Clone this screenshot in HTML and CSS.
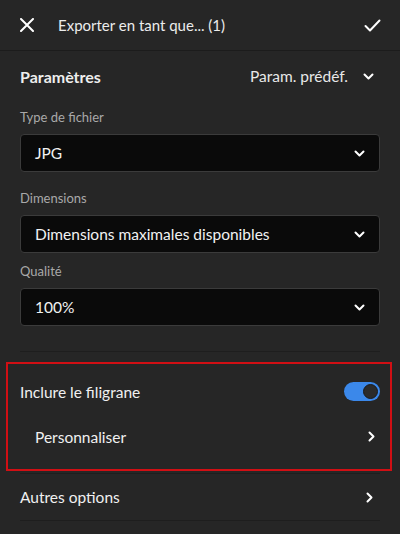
FILE: index.html
```html
<!DOCTYPE html>
<html lang="fr">
<head>
  <meta charset="UTF-8">
  <meta name="viewport" content="width=device-width, initial-scale=1.0">
  <title>Exporter en tant que</title>
  <link rel="stylesheet" href="styles.css">
</head>
<body>
  <div class="header">
    <svg class="icon-close" width="14" height="14" viewBox="0 0 14 14"><path d="M1 1L13 13M13 1L1 13" stroke="#fff" stroke-width="2" stroke-linecap="round"/></svg>
    <span class="title">Exporter en tant que... (1)</span>
    <svg class="icon-check" width="17" height="13" viewBox="0 0 17 13"><path d="M1.5 7L6 11.5L15.5 1.5" stroke="#fff" stroke-width="2" fill="none" stroke-linecap="round" stroke-linejoin="round"/></svg>
  </div>

  <div class="content">
    <div class="section-head">
      <span class="section-title">Paramètres</span>
      <span class="preset">Param. prédéf.
        <svg class="chev" width="11" height="7" viewBox="0 0 11 7"><path d="M1.5 1.5L5.5 5.5L9.5 1.5" stroke="#fff" stroke-width="2" fill="none" stroke-linecap="round" stroke-linejoin="round"/></svg>
      </span>
    </div>

    <label class="field-label first">Type de fichier</label>
    <div class="select">
      <span>JPG</span>
      <svg class="chev" width="11" height="7" viewBox="0 0 11 7"><path d="M1.5 1.5L5.5 5.5L9.5 1.5" stroke="#fff" stroke-width="2" fill="none" stroke-linecap="round" stroke-linejoin="round"/></svg>
    </div>

    <label class="field-label second">Dimensions</label>
    <div class="select">
      <span>Dimensions maximales disponibles</span>
      <svg class="chev" width="11" height="7" viewBox="0 0 11 7"><path d="M1.5 1.5L5.5 5.5L9.5 1.5" stroke="#fff" stroke-width="2" fill="none" stroke-linecap="round" stroke-linejoin="round"/></svg>
    </div>

    <label class="field-label third">Qualité</label>
    <div class="select">
      <span>100%</span>
      <svg class="chev" width="11" height="7" viewBox="0 0 11 7"><path d="M1.5 1.5L5.5 5.5L9.5 1.5" stroke="#fff" stroke-width="2" fill="none" stroke-linecap="round" stroke-linejoin="round"/></svg>
    </div>

    <div class="divider top-divider"></div>
  </div>

  <div class="watermark">
    <div class="row">
      <span>Inclure le filigrane</span>
      <div class="toggle"><div class="knob"></div></div>
    </div>
    <div class="row sub">
      <span>Personnaliser</span>
      <svg class="chev-right" width="7" height="11" viewBox="0 0 7 11"><path d="M1.5 1.5L5.5 5.5L1.5 9.5" stroke="#fff" stroke-width="2" fill="none" stroke-linecap="round" stroke-linejoin="round"/></svg>
    </div>
  </div>

  <div class="content">
    <div class="divider"></div>
    <div class="row options">
      <span>Autres options</span>
      <svg class="chev-right" width="7" height="11" viewBox="0 0 7 11"><path d="M1.5 1.5L5.5 5.5L1.5 9.5" stroke="#fff" stroke-width="2" fill="none" stroke-linecap="round" stroke-linejoin="round"/></svg>
    </div>
    <div class="divider"></div>
  </div>
</body>
</html>
```

FILE: styles.css
```css
body {
  font-family: 'Lato', 'Noto Sans', sans-serif;
  background-color: #262626;
  color: #f0f0f0;
  margin: 0;
  padding: 0;
  width: 400px;
  height: 534px;
  overflow: hidden;
}

.header {
  display: flex;
  align-items: center;
  height: 51px;
  padding: 0 19px 0 20px;
  border-bottom: 1px solid #1c1c1c;
  box-sizing: border-box;
}

.icon-close {
  margin-right: 24px;
}

.title {
  flex: 1;
  font-size: 15px;
  color: #ececec;
  padding-bottom: 1px;
}

.content {
  padding: 0 20px;
}

.section-head {
  display: flex;
  justify-content: space-between;
  align-items: center;
  height: 50px;
}

.section-title {
  font-weight: bold;
  font-size: 16px;
  color: #eee;
}

.preset {
  font-size: 15.5px;
  color: #e8e8e8;
  display: flex;
  align-items: center;
  gap: 15px;
  margin-right: 6px;
}

.field-label {
  display: block;
  font-size: 13px;
  color: #a9a9a9;
  height: 22px;
  line-height: 22px;
  margin-bottom: 6px;
}

.field-label.first {
  margin-top: 5px;
}

.field-label.second {
  margin-top: 15px;
}

.field-label.third {
  margin-top: 7px;
}

.select {
  display: flex;
  justify-content: space-between;
  align-items: center;
  height: 38px;
  background-color: #0a0a0a;
  border: 1px solid #3b3b3b;
  border-radius: 4px;
  box-sizing: border-box;
  padding: 0 14px 0 14px;
  font-size: 15.5px;
  color: #f2f2f2;
}

.divider {
  height: 1px;
  background-color: #1e1e1e;
}

.top-divider {
  margin-top: 25px;
}

.watermark {
  margin: 10px 8px 2px 6px;
  border: 2px solid #d10f14;
  height: 109px;
  box-sizing: border-box;
  padding: 5px 10px 0 12px;
}

.row {
  display: flex;
  justify-content: space-between;
  align-items: center;
  font-size: 15.5px;
  color: #f0f0f0;
}

.watermark .row {
  height: 45px;
}

.row.sub {
  padding-left: 15px;
  padding-right: 5px;
}

.toggle {
  width: 36px;
  height: 19px;
  border-radius: 10px;
  background-color: #3b88ea;
  display: flex;
  align-items: center;
  justify-content: flex-end;
  padding-right: 2px;
  box-sizing: border-box;
}

.knob {
  width: 13px;
  height: 13px;
  border-radius: 50%;
  background-color: #2b2b2b;
  border: 1px solid #1a1a1a;
}

.options {
  height: 46px;
  padding-right: 7px;
}
```
